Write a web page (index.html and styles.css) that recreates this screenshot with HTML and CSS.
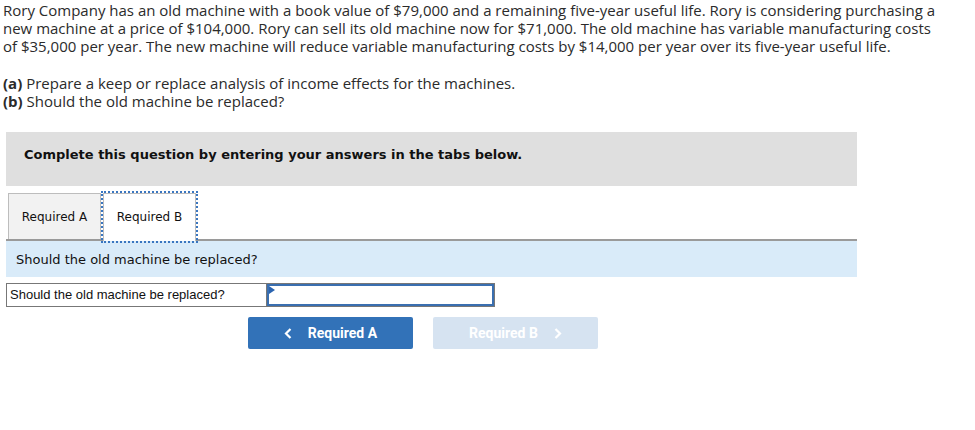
FILE: index.html
```html
<!DOCTYPE html>
<html>
<head>
<meta charset="utf-8">
<link rel="stylesheet" href="styles.css">
</head>
<body>
<div class="page">
  <p class="intro">Rory Company has an old machine with a book value of $79,000 and a remaining five-year useful life. Rory is considering purchasing a new machine at a price of $104,000. Rory can sell its old machine now for $71,000. The old machine has variable manufacturing costs of $35,000 per year. The new machine will reduce variable manufacturing costs by $14,000 per year over its five-year useful life.</p>
  <p class="parts"><b>(a)</b> Prepare a keep or replace analysis of income effects for the machines.<br><b>(b)</b> Should the old machine be replaced?</p>

  <div class="panel">
    <div class="instructions">Complete this question by entering your answers in the tabs below.</div>
    <div class="tabs">
      <div class="tab">Required A</div>
      <div class="tab active">Required B</div>
    </div>
    <div class="prompt">Should the old machine be replaced?</div>
    <div class="answer">
      <div class="answer-label">Should the old machine be replaced?</div>
      <div class="answer-input"><span class="marker"></span></div>
    </div>
    <div class="nav">
      <button class="navbtn prev"><svg class="chev left" width="8" height="11" viewBox="0 0 8 11"><path d="M6.5 1 L2 5.5 L6.5 10" fill="none" stroke="#fff" stroke-width="2.2"/></svg>Required A</button>
      <button class="navbtn next">Required B<svg class="chev right" width="8" height="11" viewBox="0 0 8 11"><path d="M1.5 1 L6 5.5 L1.5 10" fill="none" stroke="#fff" stroke-width="2.2"/></svg></button>
    </div>
  </div>
</div>
</body>
</html>
```

FILE: styles.css
```css
* { box-sizing: border-box; }
html, body { margin: 0; padding: 0; background: #fff; }
.page { padding: 0 0 0 3px; }
.intro, .parts {
  margin: 0;
  font-family: "Open Sans", "Liberation Sans", sans-serif;
  font-size: 15px;
  line-height: 18px;
  color: #2b2b2b;
  width: 945px;
}
.intro { padding-top: 1px; }
.parts { margin-top: 19px; }
.parts b { font-weight: 700; }
.panel { margin: 22px 0 0 3px; width: 851px; }
.instructions {
  background: #dfdfdf;
  height: 54px;
  padding: 15px 0 0 18px;
  font-family: "DejaVu Sans", Verdana, sans-serif;
  font-weight: bold;
  font-size: 13px;
  color: #111;
}
.tabs {
  display: flex;
  align-items: flex-end;
  padding-left: 2px;
  border-bottom: 2px solid #9a9a9a;
  height: 55px;
}
.tab {
  font-family: "DejaVu Sans", Verdana, sans-serif;
  font-size: 12px;
  color: #111;
  height: 46px;
  display: flex;
  align-items: center;
  justify-content: center;
  background: #f2f2f2;
  border: 1px solid #bdbdbd;
  border-bottom: none;
  width: 93px;
}
.tab.active {
  background: #fff;
  outline: 2px dotted #3a76c0;
  margin-left: 2px;
  height: 48px;
  margin-bottom: -2px;
  padding-bottom: 2px;
}
.prompt {
  background: #d9ebf9;
  height: 36px;
  padding: 0 0 0 10px;
  display: flex;
  align-items: center;
  font-family: "DejaVu Sans", Verdana, sans-serif;
  font-size: 13px;
  color: #111;
}
.answer {
  display: flex;
  margin-top: 6px;
  width: 489px;
  height: 24px;
  border: 1px solid #777;
}
.answer-label {
  width: 260px;
  padding: 3px 0 0 3px;
  font-family: "Liberation Sans", Arial, sans-serif;
  font-size: 13px;
  color: #111;
  border-right: 1px solid #777;
}
.answer-input {
  flex: 1;
  border: 2px solid #3a6fb0;
  position: relative;
}
.marker {
  position: absolute;
  left: 0;
  top: 0;
  width: 0; height: 0;
  border-top: 4px solid transparent;
  border-bottom: 4px solid transparent;
  border-left: 6px solid #2b64b0;
}
.nav {
  display: flex;
  gap: 20px;
  margin: 10px 0 0 242px;
}
.navbtn {
  width: 165px;
  height: 32px;
  border: none;
  border-radius: 2px;
  font-family: "Roboto", "Liberation Sans", sans-serif;
  font-weight: bold;
  font-size: 14px;
  color: #fff;
  display: flex;
  align-items: center;
  justify-content: center;
  padding: 0;
}
.prev { background: #3272b8; }
.next { background: #d6e3f1; }
.chev.left { margin-right: 16px; }
.chev.right { margin-left: 16px; }
```
